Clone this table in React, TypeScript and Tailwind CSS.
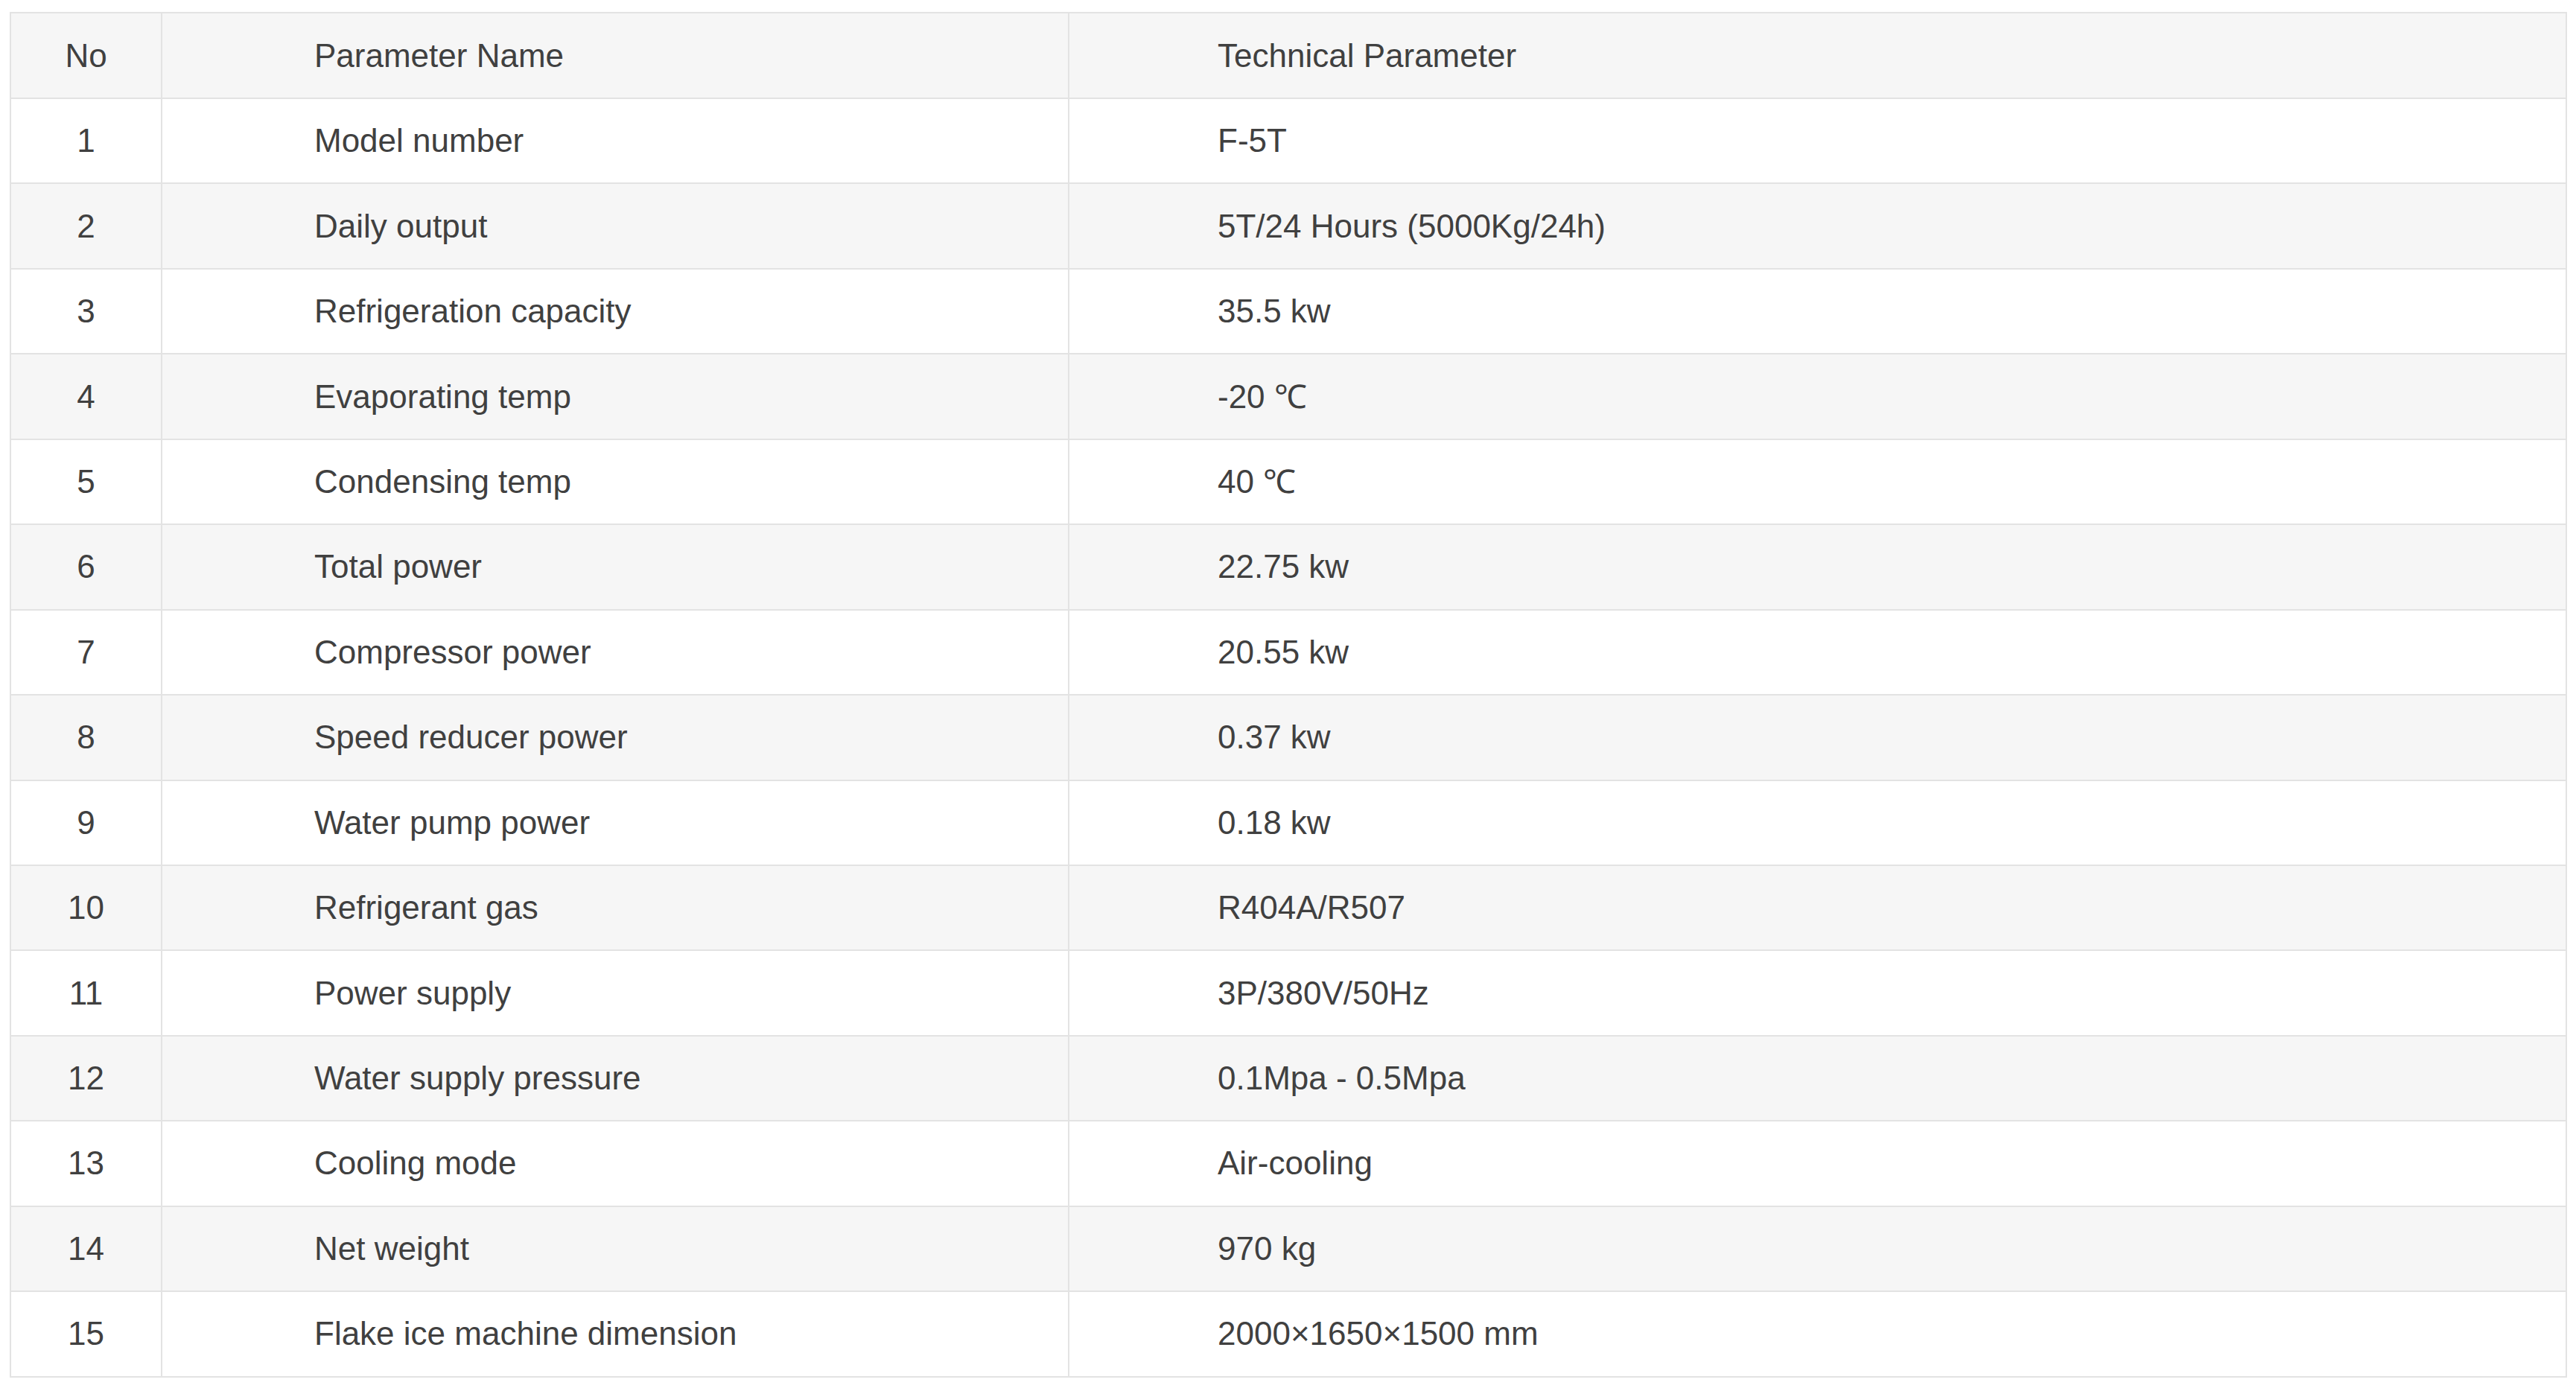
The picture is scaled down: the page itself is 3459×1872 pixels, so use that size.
const rows: [string, string][] = [
  ["Model number", "F-5T"],
  ["Daily output", "5T/24 Hours (5000Kg/24h)"],
  ["Refrigeration capacity", "35.5 kw"],
  ["Evaporating temp", "-20 \u2103"],
  ["Condensing temp", "40 \u2103"],
  ["Total power", "22.75 kw"],
  ["Compressor power", "20.55 kw"],
  ["Speed reducer power", "0.37 kw"],
  ["Water pump power", "0.18 kw"],
  ["Refrigerant gas", "R404A/R507"],
  ["Power supply", "3P/380V/50Hz"],
  ["Water supply pressure", "0.1Mpa - 0.5Mpa"],
  ["Cooling mode", "Air-cooling"],
  ["Net weight", "970 kg"],
  ["Flake ice machine dimension", "2000\u00d71650\u00d71500 mm"],
];

const App = () => {
  return (
    <div className="min-h-screen bg-white pl-[13px] pt-[16px] font-['Liberation_Sans',Arial,sans-serif] text-[44px] text-[#404040]">
      <table className="w-[3434px] border-collapse border-2 border-[#e3e3e3]">
        <colgroup>
          <col className="w-[203px]" />
          <col className="w-[1218px]" />
          <col />
        </colgroup>
        <thead>
          <tr className="h-[115px] bg-[#f6f6f6]">
            <th className="border-2 border-[#e3e3e3] text-center font-normal">No</th>
            <th className="border-2 border-[#e3e3e3] pl-[204px] text-left font-normal">Parameter Name</th>
            <th className="border-2 border-[#e3e3e3] pl-[199px] text-left font-normal">Technical Parameter</th>
          </tr>
        </thead>
        <tbody>
          {rows.map(([name, value], i) => (
            <tr key={name} className={i % 2 === 1 ? "h-[114.45px] bg-[#f6f6f6]" : "h-[114.45px] bg-white"}>
              <td className="border-2 border-[#e3e3e3] text-center">{i + 1}</td>
              <td className="border-2 border-[#e3e3e3] pl-[204px]">{name}</td>
              <td className="border-2 border-[#e3e3e3] pl-[199px]">{value}</td>
            </tr>
          ))}
        </tbody>
      </table>
    </div>
  );
};

export default App;
